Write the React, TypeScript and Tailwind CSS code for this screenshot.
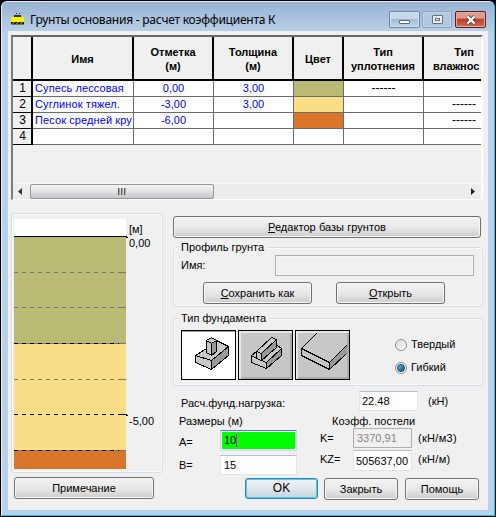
import type { ReactNode } from "react";

const ui = "font-['Liberation_Sans',Arial,sans-serif]";
const title = "font-['Noto_Sans','Open_Sans',sans-serif]";

function Button({ className, children }: { className: string; children: ReactNode }) {
  return (
    <button
      className={`flex h-[22px] shrink-0 items-center justify-center rounded-[3px] border border-[#707070] bg-linear-to-b from-[#f3f3f3] from-0% via-[#e9e9e9] via-50% to-[#cdcdcd] whitespace-nowrap shadow-[inset_0_0_0_1px_#f8f8f8] ${className}`}
    >
      {children}
    </button>
  );
}

function Group({ className, label, children }: { className: string; label: string; children: ReactNode }) {
  return (
    <fieldset className={`w-[310px] rounded-[3px] border border-[#d3dfe8] shadow-[inset_0_0_0_1px_#fafafa] ${className}`}>
      <div className="-mt-[8px] ml-[4px] flex h-[15px] w-fit items-center bg-[#f0f0f0] px-[3px] leading-[15px] whitespace-nowrap">
        {label}
      </div>
      {children}
    </fieldset>
  );
}

const columns = [
  { w: "w-[101px]", lines: ["Имя"] },
  { w: "w-[80px]", lines: ["Отметка", "(м)"] },
  { w: "w-[80px]", lines: ["Толщина", "(м)"] },
  { w: "w-[50px]", lines: ["Цвет"] },
  { w: "w-[80px]", lines: ["Тип", "уплотнения"] },
];

const rows = [
  { name: "Супесь лессовая", mark: "0,00", thick: "3,00", color: "bg-[#b9ba73]", a: "------", b: "" },
  { name: "Суглинок тяжел.", mark: "-3,00", thick: "3,00", color: "bg-[#fade87]", a: "", b: "------" },
  { name: "Песок средней кру", mark: "-6,00", thick: "", color: "bg-[#da762a]", a: "", b: "------" },
  { name: "", mark: "", thick: "", color: "bg-white", a: "", b: "" },
];

function SoilTable() {
  return (
    <div className="ml-[3px] flex h-[165px] w-[472px] flex-col border-t-2 border-r-2 border-b border-l-2 border-t-[#696969] border-r-white border-b-white border-l-[#7c7c7c] bg-[#f0f0f0] text-[11px]">
      <div className="w-[468px] overflow-hidden">
        <div className="flex h-[44px] w-[491px] border-b-2 border-black font-bold">
          <div className="w-[20px] shrink-0 border-r-2 border-black" />
          {columns.map((c, i) => (
            <div
              key={i}
              className={`${c.w} flex shrink-0 flex-col items-center justify-center border-r-2 border-black pt-px leading-[14px] whitespace-nowrap`}
            >
              {c.lines.map((l) => (
                <span key={l}>{l}</span>
              ))}
            </div>
          ))}
          <div className="flex w-[80px] shrink-0 flex-col justify-center pt-px leading-[14px]">
            <span className="text-center">Тип</span>
            <span className="ml-[9px] tracking-[-0.1px]">влажнос</span>
          </div>
        </div>
        {rows.map((r, i) => (
          <div key={i} className="flex h-[16px] w-[491px] leading-[15px] text-[#0000ff]">
            <div className="w-[20px] shrink-0 border-r-2 border-b border-black bg-[#f0f0f0] pl-px text-center text-[12px] text-black">{i + 1}</div>
            <div className="w-[101px] shrink-0 border-r border-b border-[#6c6c6c] bg-white pl-[2px] tracking-[0.1px] whitespace-nowrap">{r.name}</div>
            <div className="w-[80px] shrink-0 border-r border-b border-[#6c6c6c] bg-white text-center">{r.mark}</div>
            <div className="w-[80px] shrink-0 border-r border-b border-[#6c6c6c] bg-white text-center">{r.thick}</div>
            <div className={`w-[50px] shrink-0 border-r border-b border-[#6c6c6c] ${r.color}`} />
            <div className="w-[80px] shrink-0 border-r border-b border-[#6c6c6c] bg-white text-center text-[12px] text-black">{r.a}</div>
            <div className="w-[80px] shrink-0 border-b border-[#6c6c6c] bg-white text-center text-[12px] text-black">{r.b}</div>
          </div>
        ))}
      </div>
      <div className="mt-auto flex h-[16px] w-[468px] items-center border-t border-[#f8f8f8] bg-[#ececec]">
        <svg className="ml-[5px] h-[7px] w-[4px]" viewBox="0 0 4 7">
          <path d="M4 0v7L0 3.5z" fill="#333" />
        </svg>
        <div className="ml-[8px] flex h-[15px] w-[184px] items-center justify-center gap-[1px] rounded-[2px] border border-[#979797] bg-linear-to-b from-[#f4f4f4] via-[#e4e4e6] via-45% to-[#c4c5c9]">
          <i className="h-[7px] w-[2px] border-l border-[#555] bg-[#aaa]" />
          <i className="h-[7px] w-[2px] border-l border-[#555] bg-[#aaa]" />
          <i className="h-[7px] w-[2px] border-l border-[#555] bg-[#aaa]" />
        </div>
        <svg className="mr-[6px] ml-auto h-[7px] w-[4px]" viewBox="0 0 4 7">
          <path d="M0 0v7L4 3.5z" fill="#222" />
        </svg>
      </div>
    </div>
  );
}

function SoilProfile() {
  return (
    <div className="ml-[3px] flex h-[260px] w-[152px] rounded-[3px] border border-[#d3dfe8] pt-[5px] pl-[2px] shadow-[inset_0_0_0_1px_#fafafa]">
      <svg className="h-[250px] w-[114px] shrink-0" viewBox="0 0 114 250" shapeRendering="crispEdges">
        <rect width="112" height="18" fill="#fff" />
        <rect y="18" width="112" height="107" fill="#b9ba73" />
        <rect y="125" width="112" height="107" fill="#fade87" />
        <rect y="232" width="112" height="18" fill="#da762a" />
        <path d="M0 17.5h113M112 18.5h2" stroke="#000" />
        <path d="M0 53.5h105M0 88.5h105M0 160.5h105" stroke="#777" strokeDasharray="4 4" />
        <path d="M105 53.5h7M105 88.5h7M105 160.5h7M0 124.5h112M0 231.5h112" stroke="#777" />
        <path d="M0 124.5h105M0 195.5h105M0 231.5h105" stroke="#000" strokeDasharray="4 4" />
        <path d="M105 195.5h8M112 196.5h2" stroke="#000" />
      </svg>
      <div className="ml-[1px] flex flex-col leading-[14px]">
        <span className="mt-[3px]">[м]</span>
        <span>0,00</span>
        <span className="mt-[164px]">-5,00</span>
      </div>
    </div>
  );
}

function PadIcon() {
  return (
    <svg className="h-[48px] w-[53px]" viewBox="0 0 53 48" shapeRendering="crispEdges" stroke="#000" strokeLinejoin="round">
      <path d="M13.5 24.5L30.5 13.5L46.5 15.5L29.5 29.5Z" fill="#c8c8c8" stroke="none" />
      <path d="M13.5 24.5L24.5 17.5M34.5 9.5L46.5 15.5L29.5 29.5L13.5 24.5V31.5L29.5 38.5V29.5" fill="#c8c8c8" />
      <path d="M29.5 29.5L46.5 15.5V24.5L29.5 38.5Z" fill="#999" />
      <path d="M24.5 9.5L29.5 6.5L34.5 9.5V20.5L29.5 24.5L24.5 21.5Z" fill="#c8c8c8" />
      <path d="M29.5 12.5L34.5 9.5V20.5L29.5 24.5Z" fill="#999" />
      <path d="M24.5 9.5L29.5 12.5" fill="none" />
    </svg>
  );
}

function StripIcon() {
  return (
    <svg className="h-[48px] w-[53px]" viewBox="0 0 53 48" shapeRendering="crispEdges" stroke="#000" strokeLinejoin="round">
      <path d="M12.5 24.5L17.5 20.5L38.5 14.5L42.5 17.5V24.5L27.5 37.5L12.5 31.5Z" fill="#c8c8c8" />
      <path d="M27.5 31.5L42.5 17.5V24.5L27.5 37.5Z" fill="#999" />
      <path d="M12.5 24.5L17.5 27.5M22.5 29.5L27.5 31.5V37.5" fill="none" />
      <path d="M17.5 20.5L32.5 6.5L37.5 8.5V15.5L22.5 29.5L17.5 27.5Z" fill="#c8c8c8" />
      <path d="M22.5 22.5L37.5 8.5V16.5L22.5 29.5Z" fill="#999" />
      <path d="M17.5 20.5L22.5 22.5" fill="none" />
    </svg>
  );
}

function SlabIcon() {
  return (
    <svg className="h-[48px] w-[53px]" viewBox="0 0 53 48" shapeRendering="crispEdges" stroke="#000">
      <path d="M20.5 2.5L5.5 17.5L33.5 31.5L50.5 14.5V2.5Z" fill="#c8c8c8" stroke="none" />
      <path d="M33.5 31.5L50.5 14.5V22.5L33.5 38.5Z" fill="#999" stroke="none" />
      <path d="M20.5 2.5L5.5 17.5V24.5L33.5 38.5L50.5 22.5M5.5 17.5L33.5 31.5L50.5 14.5M33.5 31.5V38.5" fill="none" />
    </svg>
  );
}

const iconFrame = "h-[50px] w-[55px] border border-black bg-[#c6c6c6] shadow-[inset_1px_1px_0_1px_#e6e6e6,inset_-2px_-2px_0_0_#aaa]";

function Radio({ label, checked }: { label: string; checked?: boolean }) {
  return (
    <label className="flex h-[15px] items-center leading-[15px]">
      <span className="mr-[4px] flex size-[12px] items-center justify-center rounded-full border border-[#8e8f8f] bg-linear-to-br from-[#d5d8db] to-[#fafafa] shadow-[inset_0_0_0_1px_#f4f4f4]">
        {checked && <span className="size-[8px] rounded-full border border-[#173b58] bg-linear-to-br from-[#6cc9f0] to-[#0d4a7c]" />}
      </span>
      {label}
    </label>
  );
}

function TitleBar() {
  return (
    <div className="flex h-[29px] shrink-0 bg-linear-to-b from-[#98b2d2] to-[#b9cfe8]">
      <svg className="mt-[10px] ml-[9px] h-[14px] w-[14px]" viewBox="0 0 14 14">
        <path d="M5 2l1-1M8 1l1 1" stroke="#333" />
        <path d="M3 3h7v2H3z" fill="#333" />
        <path d="M0 5h13v5H0z" fill="#f7f200" />
        <path d="M0 10h13v2.500H0z" fill="#151515" />
        <path d="M1 12.500L3.500 10M5 12.500L7.500 10M9 12.500L11.500 10" stroke="#d8d000" />
      </svg>
      <span className={`mt-[9px] ml-[5px] h-[18px] w-[259px] text-[12px] leading-[18px] tracking-[-0.24px] whitespace-nowrap ${title}`}>
        Грунты основания - расчет коэффициента К
      </span>
      <div className="mt-[9px] ml-[100px] flex h-[17px]">
        <div className="flex w-[31px] items-center justify-center rounded-[2px] border border-[#6681a2] bg-linear-to-b from-[#c6d7ea] from-45% via-[#a2bad5] via-50% to-[#c0d6ea] shadow-[inset_0_0_0_1px_#d6e3f0]">
          <span className="mt-[4px] h-[4px] w-[11px] rounded-[1px] border border-[#5a6472] bg-white" />
        </div>
        <div className="ml-[2px] flex w-[30px] items-center justify-center rounded-[2px] border border-[#8ca4c2] bg-[#b2c9e2] shadow-[inset_0_0_0_1px_#c2d5e9]">
          <span className="flex h-[9px] w-[11px] items-center justify-center rounded-[1px] border border-[#65707d] bg-[#e8eef4]">
            <span className="h-[3px] w-[5px] border border-[#65707d]" />
          </span>
        </div>
        <div className="ml-[3px] flex w-[31px] items-center justify-center rounded-[2px] border border-[#5c2022] bg-linear-to-b from-[#dc9b90] from-40% via-[#bd3f2c] via-50% to-[#cf6a50] shadow-[inset_0_0_0_1px_#e3aaa0]">
          <svg className="h-[10px] w-[12px]" viewBox="0 0 12 10">
            <path d="M2.500 1.500l7 7M9.500 1.500l-7 7" stroke="#59484c" strokeWidth="4" />
            <path d="M2.500 1.500l7 7M9.500 1.500l-7 7" stroke="#fff" strokeWidth="2.200" />
          </svg>
        </div>
      </div>
    </div>
  );
}

const edit = "box-border border border-[#e1e4ea] border-t-[#b8bcc6] bg-white whitespace-nowrap";

export default function App() {
  return (
    <div className={`h-[517px] w-[496px] bg-black p-px text-[11px] text-black ${ui}`}>
      <div className="flex h-[515px] w-[494px] flex-col overflow-hidden rounded-t-[6px] border-t border-r border-b border-l border-t-[#dbe8f5] border-r-[#27c5ee] border-b-[#27c5ee] border-l-[#e8f0f8] bg-[#b9d1ea]">
        <TitleBar />
        <div className="ml-[6px] flex h-[479px] w-[480px] flex-col bg-[#f0f0f0] pt-[4px]">
          <SoilTable />
          <div className="mt-[13px] flex">
            <div className="flex w-[165px] shrink-0 flex-col">
              <SoilProfile />
              <Button className="mt-[4px] ml-[6px] w-[140px]">Примечание</Button>
            </div>
            <div className="flex w-[313px] flex-col pt-[3px]">
              <Button className="w-[308px]">
                <span className="tracking-[0.05px]"><u>Р</u>едактор базы грунтов</span>
              </Button>
              <Group className="mt-[9px] h-[60px]" label="Профиль грунта">
                <div className="flex h-[21px] pl-[7px]">
                  <span className="mt-[3px] w-[94px] leading-[15px]">Имя:</span>
                  <div className="h-[21px] w-[199px] border border-[#afafaf] shadow-[inset_0_0_0_1px_#f6f6f6]" />
                </div>
                <div className="mt-[6px] flex pl-[29px]">
                  <Button className="w-[109px]"><span><u>С</u>охранить как</span></Button>
                  <Button className="ml-[24px] w-[109px]"><span><u>О</u>ткрыть</span></Button>
                </div>
              </Group>
              <Group className="mt-[11px] h-[68px]" label="Тип фундамента">
                <div className="mt-[4px] flex pl-[7px]">
                  <div className="flex gap-[2px]">
                    <div className="h-[50px] w-[55px] border border-black bg-white shadow-[inset_0_1px_0_0_#999]"><PadIcon /></div>
                    <div className={iconFrame}><StripIcon /></div>
                    <div className={iconFrame}><SlabIcon /></div>
                  </div>
                  <div className="mt-[7px] ml-[45px] flex flex-col gap-[8px]">
                    <Radio label="Твердый" />
                    <Radio label="Гибкий" checked />
                  </div>
                </div>
              </Group>
              <div className="mt-[5px] flex h-[20px] pl-[8px]">
                <span className="mt-[5px] w-[178px] leading-[14px]">Расч.фунд.нагрузка:</span>
                <div className={`h-[20px] w-[59px] pl-[2px] leading-[18px] ${edit}`}>22.48</div>
                <span className="ml-[10px] leading-[20px]">(кН)</span>
              </div>
              <div className="mt-[3px] flex h-[14px] pl-[6px] leading-[14px]">
                <span className="w-[153px]">Размеры (м)</span>
                <span>Коэфф. постели</span>
              </div>
              <div className="flex h-[45px] pl-[6px]">
                <div className="flex w-[141px] flex-col gap-[2px] pt-[2px]">
                  <div className="flex">
                    <span className="w-[41px] pt-[2px] leading-[21px]">A=</span>
                    <div className="h-[21px] w-[77px] border border-[#c5dcf0] border-t-[#4f80b8] bg-white p-px">
                      <div className="flex h-[17px] items-center bg-[#00ff00] pl-[2px]">
                        <span>10</span>
                        <span className="h-[13px] w-px bg-[#ff00ff]" />
                      </div>
                    </div>
                  </div>
                  <div className="flex">
                    <span className="w-[41px] leading-[21px]">B=</span>
                    <div className={`h-[20px] w-[77px] pl-[3px] leading-[18px] ${edit}`}>15</div>
                  </div>
                </div>
                <div className="flex flex-col gap-[2px]">
                  <div className="flex leading-[20px]">
                    <span className="w-[33px]">K=</span>
                    <div className="h-[20px] w-[59px] border border-[#afafaf] pl-[3px] leading-[18px] text-[#858585]">3370,91</div>
                    <span className="ml-[6px] tracking-[0.3px]">(кН/м3)</span>
                  </div>
                  <div className="flex leading-[20px]">
                    <span className="w-[33px] leading-[19px]">KZ=</span>
                    <div className={`h-[21px] w-[59px] pl-[2px] leading-[20px] ${edit}`}>505637,00</div>
                    <span className="ml-[6px] leading-[19px] tracking-[0.3px]">(кН/м)</span>
                  </div>
                </div>
              </div>
              <div className="mt-[5px] flex pl-[72px]">
                <button className="h-[21px] w-[73px] rounded-[3px] border border-[#3c7fb1] bg-linear-to-b from-[#eef3f6] via-[#e0e8ed] via-50% to-[#c3d3dd] text-[12px] leading-[19px] shadow-[inset_0_0_0_1px_#45cdf3]">OK</button>
                <Button className="ml-[6px] w-[74px]">Закрыть</Button>
                <Button className="ml-[7px] w-[74px]">Помощь</Button>
              </div>
            </div>
          </div>
        </div>
      </div>
    </div>
  );
}
